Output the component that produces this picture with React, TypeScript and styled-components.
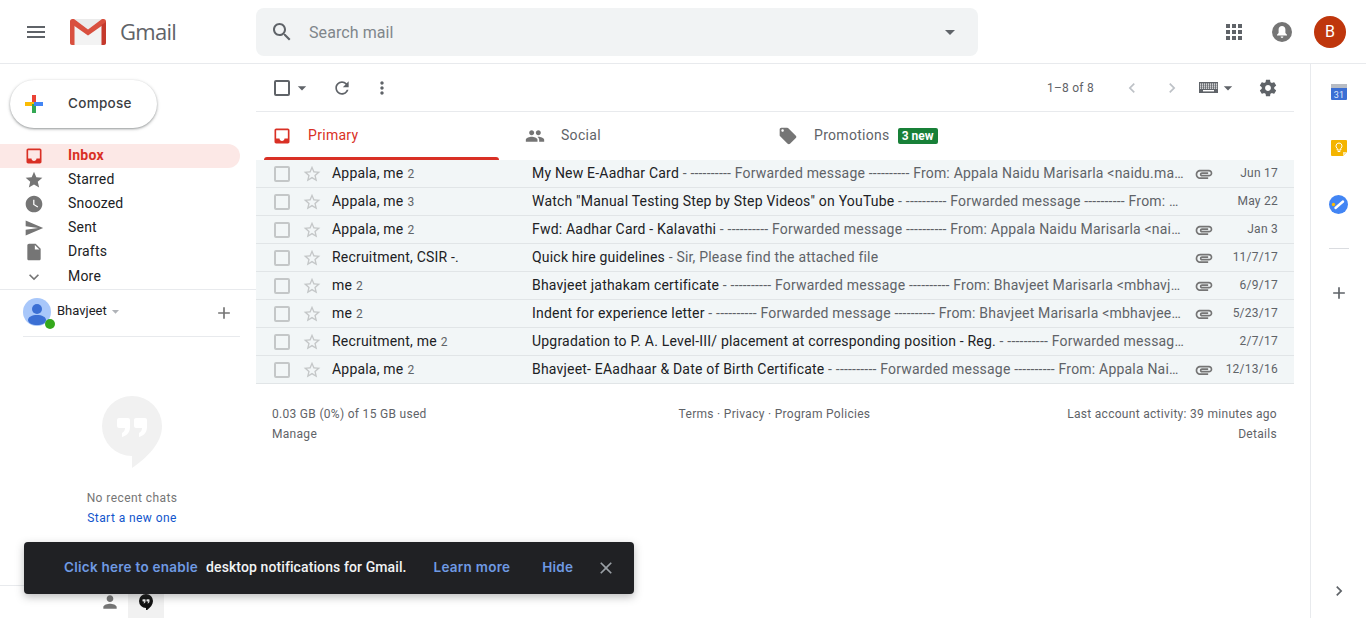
import styled, { createGlobalStyle } from "styled-components";

const PATHS = {
	menu: "M3 18h18v-2H3v2zm0-5h18v-2H3v2zm0-7v2h18V6H3z",
	search: "M15.5 14h-.79l-.28-.27C15.41 12.59 16 11.11 16 9.5 16 5.91 13.09 3 9.5 3S3 5.91 3 9.5 5.91 16 9.5 16c1.61 0 3.09-.59 4.23-1.57l.27.28v.79l5 4.99L20.49 19l-4.99-5zm-6 0C7.01 14 5 11.99 5 9.5S7.01 5 9.5 5 14 7.01 14 9.5 11.99 14 9.5 14z",
	caret: "M7 10l5 5 5-5z",
	apps: "M4 8h4V4H4v4zm6 12h4v-4h-4v4zm-6 0h4v-4H4v4zm0-6h4v-4H4v4zm6 0h4v-4h-4v4zm6-10v4h4V4h-4zm-6 4h4V4h-4v4zm6 6h4v-4h-4v4zm0 6h4v-4h-4v4z",
	refresh: "M17.65 6.35C16.2 4.9 14.21 4 12 4c-4.42 0-7.99 3.58-7.99 8s3.57 8 7.99 8c3.73 0 6.84-2.55 7.73-6h-2.08c-.82 2.33-3.04 4-5.65 4-3.31 0-6-2.69-6-6s2.69-6 6-6c1.66 0 3.14.69 4.22 1.78L13 11h7V4l-2.35 2.35z",
	dots: "M12 8c1.1 0 2-.9 2-2s-.9-2-2-2-2 .9-2 2 .9 2 2 2zm0 2c-1.1 0-2 .9-2 2s.9 2 2 2 2-.9 2-2-.9-2-2-2zm0 6c-1.1 0-2 .9-2 2s.9 2 2 2 2-.9 2-2-.9-2-2-2z",
	inbox: "M19 3H5c-1.1 0-2 .9-2 2v14c0 1.1.9 2 2 2h14c1.1 0 2-.9 2-2V5c0-1.1-.9-2-2-2zm0 12h-4c0 1.66-1.34 3-3 3s-3-1.34-3-3H5V5h14v10z",
	star: "M12 17.27L18.18 21l-1.64-7.03L22 9.24l-7.19-.61L12 2 9.19 8.63 2 9.24l5.46 4.73L5.82 21z",
	starOutline: "M22 9.24l-7.19-.62L12 2 9.19 8.63 2 9.24l5.46 4.73L5.82 21 12 17.27 18.18 21l-1.63-7.03L22 9.24zM12 15.4l-3.76 2.27 1-4.28-3.32-2.88 4.38-.38L12 6.1l1.71 4.04 4.38.38-3.32 2.88 1 4.28L12 15.4z",
	clock: "M12 2C6.47 2 2 6.48 2 12s4.47 10 10 10 10-4.48 10-10S17.52 2 12 2zm4.25 14.15L11 13V7h1.5v5.25l4.5 2.67-.75 1.23z",
	send: "M2.01 21L23 12 2.01 3 2 10l15 2-15 2z",
	draft: "M6 2c-1.1 0-1.99.9-1.99 2L4 20c0 1.1.89 2 1.99 2H18c1.1 0 2-.9 2-2V8l-6-6H6zm7 7V3.5L18.5 9H13z",
	expand: "M16.59 8.59L12 13.17 7.41 8.59 6 10l6 6 6-6z",
	plus: "M19 13h-6v6h-2v-6H5v-2h6V5h2v6h6v2z",
	people: "M16 11c1.66 0 2.99-1.34 2.99-3S17.66 5 16 5c-1.66 0-3 1.34-3 3s1.34 3 3 3zm-8 0c1.66 0 2.99-1.34 2.99-3S9.66 5 8 5C6.34 5 5 6.34 5 8s1.34 3 3 3zm0 2c-2.33 0-7 1.17-7 3.5V19h14v-2.5c0-2.33-4.67-3.5-7-3.5zm8 0c-.29 0-.62.02-.97.05 1.16.84 1.97 1.97 1.97 3.45V19h6v-2.5c0-2.33-4.67-3.5-7-3.5z",
	tag: "M21.41 11.58l-9-9C12.05 2.22 11.55 2 11 2H4c-1.1 0-2 .9-2 2v7c0 .55.22 1.05.59 1.42l9 9c.36.36.86.58 1.41.58.55 0 1.05-.22 1.41-.59l7-7c.37-.36.59-.86.59-1.41 0-.55-.23-1.06-.59-1.42zM5.5 7C4.67 7 4 6.33 4 5.5S4.67 4 5.5 4 7 4.67 7 5.5 6.33 7 5.5 7z",
	gear: "M19.43 12.98c.04-.32.07-.64.07-.98s-.03-.66-.07-.98l2.11-1.65c.19-.15.24-.42.12-.64l-2-3.46c-.12-.22-.39-.3-.61-.22l-2.49 1c-.52-.4-1.08-.73-1.69-.98l-.38-2.65C14.46 2.18 14.25 2 14 2h-4c-.25 0-.46.18-.49.42l-.38 2.65c-.61.25-1.17.59-1.69.98l-2.49-1c-.23-.09-.49 0-.61.22l-2 3.46c-.13.22-.07.49.12.64l2.11 1.65c-.04.32-.07.65-.07.98s.03.66.07.98l-2.11 1.65c-.19.15-.24.42-.12.64l2 3.46c.12.22.39.3.61.22l2.49-1c.52.4 1.08.73 1.69.98l.38 2.65c.03.24.24.42.49.42h4c.25 0 .46-.18.49-.42l.38-2.65c.61-.25 1.17-.59 1.69-.98l2.49 1c.23.09.49 0 .61-.22l2-3.46c.12-.22.07-.49-.12-.64l-2.11-1.65zM12 15.5c-1.93 0-3.5-1.57-3.5-3.5s1.57-3.5 3.5-3.5 3.5 1.57 3.5 3.5-1.57 3.5-3.5 3.5z",
	attach: "M2 12.5C2 9.46 4.46 7 7.5 7H18c2.21 0 4 1.79 4 4s-1.79 4-4 4H9.5C8.12 15 7 13.88 7 12.5S8.12 10 9.5 10H17v2H9.41c-.55 0-.55 1 0 1H18c1.1 0 2-.9 2-2s-.9-2-2-2H7.5C5.57 9 4 10.57 4 12.5S5.57 16 7.5 16H17v2H7.5C4.46 18 2 15.54 2 12.5z",
	person: "M12 12c2.21 0 4-1.79 4-4s-1.79-4-4-4-4 1.79-4 4 1.79 4 4 4zm0 2c-2.67 0-8 1.34-8 4v2h16v-2c0-2.66-5.33-4-8-4z",
	close: "M19 6.41L17.59 5 12 10.59 6.41 5 5 6.41 10.59 12 5 17.59 6.41 19 12 13.41 17.59 19 19 17.59 13.41 12z",
	left: "M15.41 7.41L14 6l-6 6 6 6 1.41-1.41L10.83 12z",
	right: "M10 6L8.59 7.41 13.17 12l-4.58 4.59L10 18l6-6z",
};

const Glyph = styled.svg<{ $size: number; $color: string }>`
	display: block;
	flex: none;
	width: ${({ $size }) => $size}px;
	height: ${({ $size }) => $size}px;
	fill: ${({ $color }) => $color};
`;

const Icon = ({ name, size = 24, color = "#5f6368" }: { name: keyof typeof PATHS; size?: number; color?: string }) => (
	<Glyph $size={size} $color={color} viewBox="0 0 24 24">
		<path d={PATHS[name]} />
	</Glyph>
);

const Global = createGlobalStyle`
	html, body {
		margin: 0;
		height: 100%;
		overflow: hidden;
		background: #fff;
		font-family: Roboto, "Liberation Sans", sans-serif;
		font-size: 14px;
		letter-spacing: 0.2px;
		color: #202124;
	}
`;

const Page = styled.div`
	position: relative;
	height: 618px;
	display: flex;
	flex-direction: column;
	overflow: hidden;
`;

const Header = styled.header`
	display: flex;
	align-items: center;
	height: 63px;
	flex: none;
	border-bottom: 1px solid #e8eaed;
`;

const Brand = styled.div`
	display: flex;
	align-items: center;
	width: 256px;
	flex: none;
	padding-left: 24px;
	box-sizing: border-box;
`;

const BrandName = styled.span`
	margin-left: 14px;
	margin-bottom: 2px;
	font-family: "Open Sans", Roboto, sans-serif;
	font-size: 22px;
	letter-spacing: -0.7px;
	color: #5f6368;
`;

const SearchBox = styled.div`
	display: flex;
	align-items: center;
	width: 722px;
	height: 48px;
	padding: 0 16px 0 14px;
	box-sizing: border-box;
	background: #f1f3f4;
	border-radius: 8px;
`;

const SearchText = styled.span`
	flex: 1;
	margin-left: 15px;
	margin-top: 1px;
	font-size: 16px;
	letter-spacing: 0.08px;
	color: #80868b;
`;

const HeaderActions = styled.div`
	display: flex;
	align-items: center;
	margin-left: auto;
	padding-right: 20px;
`;

const BellSlot = styled.div`
	display: flex;
	margin-left: 26px;
`;

const Avatar = styled.div`
	display: flex;
	align-items: center;
	justify-content: center;
	width: 32px;
	height: 32px;
	margin-left: 22px;
	border-radius: 50%;
	background: #bf360c;
	color: #fff;
	font-size: 16px;
`;

const Body = styled.div`
	flex: 1;
	min-height: 0;
	display: grid;
	grid-template-columns: 256px 1038px 1fr 56px;
`;

const Sidebar = styled.aside`
	display: flex;
	flex-direction: column;
	min-height: 0;
`;

const ComposeArea = styled.div`
	padding: 16px 0 16px 10px;
`;

const ComposeButton = styled.div`
	display: flex;
	align-items: center;
	width: 147px;
	height: 48px;
	box-sizing: border-box;
	padding-left: 15px;
	border-radius: 24px;
	background: #fff;
	box-shadow: 0 1px 2px rgba(60, 64, 67, 0.4), 0 1px 3px 1px rgba(60, 64, 67, 0.15);
	font-family: Inter, Roboto, sans-serif;
	font-weight: 500;
	font-size: 13.5px;
	letter-spacing: 0.3px;
	color: #3c4043;
`;

const ComposeLabel = styled.span`
	margin-left: 25px;
	margin-bottom: 2px;
`;

const NavList = styled.nav`
	display: flex;
	flex-direction: column;
	padding-bottom: 1px;
	border-bottom: 1px solid #e8eaed;
`;

const NavRow = styled.div<{ $active?: boolean; $nudge?: boolean }>`
	display: flex;
	align-items: center;
	width: 240px;
	height: 24px;
	padding-left: 24px;
	box-sizing: border-box;
	border-radius: 0 12px 12px 0;
	background: ${({ $active }) => ($active ? "#fce8e6" : "transparent")};
	color: ${({ $active }) => ($active ? "#d93025" : "#202124")};
	font-weight: ${({ $active }) => ($active ? 700 : 400)};
	padding-top: ${({ $nudge }) => ($nudge ? "2px" : "0")};
`;

const NavLabel = styled.span`
	margin-left: 24px;
	margin-bottom: 2px;
`;

const AccountRow = styled.div`
	display: flex;
	align-items: center;
	height: 46px;
	margin-left: 23px;
	width: 217px;
	border-bottom: 1px solid #e8eaed;
`;

const AccountPhoto = styled.div`
	position: relative;
	width: 28px;
	height: 28px;
	margin-top: -2px;
`;

const OnlineDot = styled.span`
	position: absolute;
	right: -4px;
	bottom: -3px;
	width: 10px;
	height: 10px;
	border-radius: 50%;
	background: #34a81c;
`;

const AccountName = styled.span`
	margin-left: 6px;
	margin-top: -6px;
	font-size: 13px;
	letter-spacing: 0;
`;

const AccountCaret = styled.div`
	margin-top: -4px;
`;

const AccountPlus = styled.div`
	margin-left: auto;
	margin-right: 6px;
`;

const ChatEmpty = styled.div`
	display: flex;
	flex-direction: column;
	align-items: center;
	padding-top: 59px;
	padding-left: 8px;
	font-size: 12px;
	line-height: 20px;
	letter-spacing: 0.42px;
	color: #757575;
`;

const ChatLink = styled.span`
	color: #1155cc;
`;

const ChatBubbleSpace = styled.div`
	margin-bottom: 14px;
`;

const ChatTabs = styled.div`
	display: flex;
	margin-top: auto;
	height: 32px;
	flex: none;
	padding-left: 92px;
	border-top: 1px solid #e8eaed;
`;

const ChatTab = styled.div<{ $active?: boolean }>`
	display: flex;
	align-items: center;
	justify-content: center;
	width: 36px;
	background: ${({ $active }) => ($active ? "#f1f1f1" : "transparent")};
`;

const Main = styled.main`
	display: flex;
	flex-direction: column;
	min-width: 0;
`;

const Toolbar = styled.div`
	display: flex;
	align-items: center;
	height: 47px;
	flex: none;
	padding: 0 16px 0 18px;
	border-bottom: 1px solid #e8eaed;
`;

const ToolCheck = styled.span`
	width: 12px;
	height: 12px;
	border: 2px solid #5f6368;
	border-radius: 2px;
`;

const ToolSlot = styled.div<{ $width: number }>`
	display: flex;
	align-items: center;
	justify-content: center;
	width: ${({ $width }) => $width}px;
	flex: none;
`;

const PageCount = styled.span`
	margin-left: auto;
	margin-right: 18px;
	font-size: 12px;
	letter-spacing: 0.25px;
	color: #5f6368;
`;

const KeyboardSlot = styled.div`
	display: flex;
	align-items: center;
	margin-left: 7px;
	margin-right: 20px;
`;

const Tabs = styled.div`
	display: flex;
	height: 48px;
	flex: none;
	padding-left: 8px;
`;

const Tab = styled.div<{ $active?: boolean }>`
	position: relative;
	display: flex;
	align-items: center;
	width: 253px;
	padding-left: 8px;
	box-sizing: border-box;
	color: ${({ $active }) => ($active ? "#d93025" : "#5f6368")};
	letter-spacing: 0.3px;
	&::after {
		content: "";
		display: ${({ $active }) => ($active ? "block" : "none")};
		position: absolute;
		left: 0;
		right: 18px;
		bottom: 0;
		height: 3px;
		border-radius: 3px 3px 0 0;
		background: #d93025;
	}
`;

const TabLabel = styled.span`
	margin-left: 16px;
	margin-bottom: 2px;
`;

const NewBadge = styled.span`
	margin-left: 8px;
	padding: 0 4px;
	height: 16px;
	line-height: 16px;
	border-radius: 2px;
	background: #188038;
	color: #fff;
	font-size: 12px;
	font-weight: 700;
	letter-spacing: 0;
`;

const MailRow = styled.div`
	display: flex;
	align-items: center;
	height: 27px;
	padding-left: 18px;
	background: #f2f6f7;
	border-bottom: 1px solid #e1e5e7;
`;

const RowCheck = styled.span`
	width: 12px;
	height: 12px;
	flex: none;
	border: 2px solid #c4c7c8;
	border-radius: 2px;
`;

const RowStar = styled.div`
	margin-left: 12px;
	margin-right: 10px;
`;

const Sender = styled.div`
	width: 200px;
	flex: none;
	margin-bottom: 2px;
	white-space: nowrap;
`;

const SenderCount = styled.span`
	margin-left: 4px;
	font-size: 12px;
	color: #5f6368;
`;

const Message = styled.div`
	width: 652px;
	flex: none;
	margin-bottom: 2px;
	overflow: hidden;
	white-space: nowrap;
	text-overflow: ellipsis;
	color: #5f6368;
`;

const Subject = styled.span`
	color: #202124;
`;

const AttachSlot = styled.div`
	width: 20px;
	margin-left: 10px;
	flex: none;
`;

const MailDate = styled.div`
	margin-left: auto;
	margin-bottom: 2px;
	padding-right: 16px;
	font-size: 12px;
	letter-spacing: 0.25px;
	color: #5f6368;
`;

const Footer = styled.footer`
	display: grid;
	grid-template-columns: 1fr 1fr 1fr;
	padding: 20px 17px 0 16px;
	font-size: 12px;
	line-height: 20px;
	letter-spacing: 0.3px;
	color: #5f6368;
`;

const FooterCell = styled.div<{ $align: string }>`
	text-align: ${({ $align }) => $align};
`;

const RightRail = styled.aside`
	display: flex;
	flex-direction: column;
	align-items: center;
	grid-column: 4;
	border-left: 1px solid #e8eaed;
	padding: 0 0 17px;
`;

const RailItem = styled.div`
	display: flex;
	align-items: center;
	justify-content: center;
	height: 56px;
	width: 100%;
	&:nth-child(3) {
		margin-bottom: 16px;
	}
`;

const RailRule = styled.div`
	width: 20px;
	height: 1px;
	background: #dadce0;
	margin-bottom: 16px;
`;

const RailBottom = styled.div`
	margin-top: auto;
`;

const Toast = styled.div`
	position: absolute;
	left: 24px;
	bottom: 24px;
	display: flex;
	align-items: center;
	width: 610px;
	height: 52px;
	box-sizing: border-box;
	padding-left: 40px;
	border-radius: 4px;
	background: #202124;
	box-shadow: 0 3px 8px rgba(60, 64, 67, 0.35);
	color: #e8eaed;
	white-space: nowrap;
`;

const ToastLink = styled.span<{ $gap: number }>`
	margin-left: ${({ $gap }) => $gap}px;
	margin-bottom: 2px;
	font-family: Inter, Roboto, sans-serif;
	font-weight: 600;
	font-size: 13.5px;
	letter-spacing: 0.26px;
	color: #6f9ae3;
`;

const ToastText = styled.span`
	margin-left: 8px;
	margin-bottom: 2px;
	font-weight: 500;
	letter-spacing: 0.1px;
	color: #f1f3f4;
`;

const ToastClose = styled.div`
	margin-left: 23px;
`;

const GmailLogo = () => (
	<svg width="36" height="26" viewBox="0 0 36 26">
		<rect width="36" height="26" rx="2" fill="#ebebeb" />
		<path d="M4.500 26V7l13.500 9.500L31.500 7v19z" fill="#f3f3f3" />
		<path d="M0 2.500C0 1 1 0 2.500 0H4l14 10.500L32 0h1.500C35 0 36 1 36 2.500V4L31.500 7 18 16.500 4.500 7 0 4z" fill="#d9503f" />
		<path d="M0 3l4.500 3v20H2c-1 0-2-1-2-2z" fill="#d9503f" />
		<path d="M36 3l-4.500 3v20H34c1 0 2-1 2-2z" fill="#c5392c" />
	</svg>
);

const ColorPlus = () => (
	<svg width="18" height="18" viewBox="0 0 18 18">
		<rect x="7" y="0" width="4" height="9" fill="#ea4335" />
		<rect x="0" y="7" width="9" height="4" fill="#fbbc04" />
		<rect x="7" y="9" width="4" height="9" fill="#34a853" />
		<rect x="9" y="7" width="9" height="4" fill="#4285f4" />
	</svg>
);

const AccountPicture = () => (
	<svg width="28" height="28" viewBox="0 0 28 28">
		<circle cx="14" cy="14" r="14" fill="#a8c7fa" />
		<circle cx="14" cy="11" r="5" fill="#3b6fd4" />
		<path d="M5 22c0-3 4-5 9-5s9 2 9 5-4 5-9 5-9-2-9-5z" fill="#3b6fd4" />
	</svg>
);

const BellIcon = () => (
	<svg width="20" height="20" viewBox="0 0 20 20">
		<circle cx="10" cy="10" r="10" fill="#757575" />
		<path d="M10 4c-2 0-3.400 1.500-3.400 3.500V11L5 12.800v.7h10v-.7L13.400 11V7.500C13.400 5.500 12 4 10 4z" fill="#fff" />
		<path d="M8.600 14.500h2.800a1.400 1.400 0 0 1-2.800 0z" fill="#fff" />
	</svg>
);

const KeyboardIcon = () => (
	<svg width="19" height="11" viewBox="0 0 19 11">
		<rect width="19" height="11" fill="#5f6368" />
		{[1.5, 3.5, 5.5].map((y) =>
			[1, 3, 5, 7, 9, 11, 13, 15, 17].map((x) => (
				<rect key={`${x}-${y}`} x={x} y={y} width="1.2" height="1.2" fill="#fff" />
			)),
		)}
		<rect x="4" y="8" width="11" height="1.4" fill="#fff" />
	</svg>
);

const HangoutsBubble = ({ size, fill, mark }: { size: number; fill: string; mark: string }) => (
	<svg width={size} height={(size * 72) / 60} viewBox="0 0 60 72">
		<path d="M30 0a30 30 0 0 1 30 30c0 17-14 31-30 42V60A30 30 0 0 1 30 0z" fill={fill} />
		<path d="M15 24q0-2 2-2h9q2 0 2 2v7c0 6-4 9-8 10v-4c2-1 3-3 3-5h-6q-2 0-2-2z" fill={mark} />
		<path d="M32 24q0-2 2-2h9q2 0 2 2v7c0 6-4 9-8 10v-4c2-1 3-3 3-5h-6q-2 0-2-2z" fill={mark} />
	</svg>
);

const CalendarIcon = () => (
	<svg width="16" height="16" viewBox="0 0 16 16">
		<rect width="16" height="16" rx="1" fill="#3b6fd4" />
		<rect width="16" height="4" fill="#b7bcc4" />
		<text x="8" y="13.500" textAnchor="middle" fontFamily="Roboto, sans-serif" fontSize="9" fill="#dfe8fb">
			31
		</text>
	</svg>
);

const KeepIcon = () => (
	<svg width="16" height="16" viewBox="0 0 16 16">
		<path d="M1 0h14a1 1 0 0 1 1 1v11l-4 4H1a1 1 0 0 1-1-1V1a1 1 0 0 1 1-1z" fill="#f4b400" />
		<path d="M16 12h-4v4z" fill="#fbe7a9" />
		<path d="M8 3a3 3 0 0 0-1.800 5.400V10h3.600V8.400A3 3 0 0 0 8 3z" fill="none" stroke="#fff" strokeWidth="1" />
		<rect x="6.700" y="11" width="2.600" height="1" fill="#fff" />
	</svg>
);

const TasksIcon = () => (
	<svg width="19" height="19" viewBox="0 0 19 19">
		<circle cx="9.500" cy="9.500" r="9.500" fill="#4285f4" />
		<path d="M6.500 13l7.500-6.500" stroke="#fff" strokeWidth="2.400" strokeLinecap="round" />
		<circle cx="4.500" cy="9.500" r="1.700" fill="#fbbc04" />
	</svg>
);

const NAV = [
	{ label: "Inbox", icon: "inbox", active: true },
	{ label: "Starred", icon: "star" },
	{ label: "Snoozed", icon: "clock" },
	{ label: "Sent", icon: "send" },
	{ label: "Drafts", icon: "draft" },
	{ label: "More", icon: "expand", nudge: true },
] as const;

const DASH = "----------";

const MAILS = [
	{ sender: "Appala, me", count: 2, subject: "My New E-Aadhar Card", snippet: `${DASH} Forwarded message ${DASH} From: Appala Naidu Marisarla <naidu.marisarla@gmail.com> Date: Sun, Jun 17`, attach: true, date: "Jun 17" },
	{ sender: "Appala, me", count: 3, subject: 'Watch "Manual Testing Step by Step Videos" on YouTube', snippet: `${DASH} Forwarded message ${DASH} From: Appala Naidu Marisarla`, attach: false, date: "May 22" },
	{ sender: "Appala, me", count: 2, subject: "Fwd: Aadhar Card - Kalavathi", snippet: `${DASH} Forwarded message ${DASH} From: Appala Naidu Marisarla <naidu.marisarla@gmail.com> Date: Wed`, attach: true, date: "Jan 3" },
	{ sender: "Recruitment, CSIR -.", subject: "Quick hire guidelines", snippet: "Sir, Please find the attached file", attach: true, date: "11/7/17" },
	{ sender: "me", count: 2, subject: "Bhavjeet jathakam certificate", snippet: `${DASH} Forwarded message ${DASH} From: Bhavjeet Marisarla <mbhavjeet@gmail.com> Date: Fri, Jun 9`, attach: true, date: "6/9/17" },
	{ sender: "me", count: 2, subject: "Indent for experience letter", snippet: `${DASH} Forwarded message ${DASH} From: Bhavjeet Marisarla <mbhavjeet@gmail.com> Date: Tue, May 23`, attach: true, date: "5/23/17" },
	{ sender: "Recruitment, me", count: 2, subject: "Upgradation to P. A. Level-III/ placement at corresponding position - Reg.", snippet: `${DASH} Forwarded message ${DASH} From: Recruitment`, attach: false, date: "2/7/17" },
	{ sender: "Appala, me", count: 2, subject: "Bhavjeet- EAadhaar & Date of Birth Certificate", snippet: `${DASH} Forwarded message ${DASH} From: Appala Naidu Marisarla <naidu.marisarla@gmail.com>`, attach: true, date: "12/13/16" },
];

const App = () => {
	return (
		<Page>
			<Global />
			<Header>
				<Brand>
					<Icon name="menu" />
					<ToolSlot $width={22} />
					<GmailLogo />
					<BrandName>Gmail</BrandName>
				</Brand>
				<SearchBox>
					<Icon name="search" />
					<SearchText>Search mail</SearchText>
					<Icon name="caret" />
				</SearchBox>
				<HeaderActions>
					<Icon name="apps" color="#5f6368" />
					<BellSlot>
						<BellIcon />
					</BellSlot>
					<Avatar>B</Avatar>
				</HeaderActions>
			</Header>
			<Body>
				<Sidebar>
					<ComposeArea>
						<ComposeButton>
							<ColorPlus />
							<ComposeLabel>Compose</ComposeLabel>
						</ComposeButton>
					</ComposeArea>
					<NavList>
						{NAV.map((item) => (
							<NavRow key={item.label} $active={"active" in item} $nudge={"nudge" in item}>
								<Icon name={item.icon} size={20} color={"active" in item ? "#d93025" : "#757575"} />
								<NavLabel>{item.label}</NavLabel>
							</NavRow>
						))}
					</NavList>
					<AccountRow>
						<AccountPhoto>
							<AccountPicture />
							<OnlineDot />
						</AccountPhoto>
						<AccountName>Bhavjeet</AccountName>
						<AccountCaret>
							<Icon name="caret" size={17} color="#b0b3b8" />
						</AccountCaret>
						<AccountPlus>
							<Icon name="plus" size={20} color="#757575" />
						</AccountPlus>
					</AccountRow>
					<ChatEmpty>
						<ChatBubbleSpace>
							<HangoutsBubble size={60} fill="#f1f1f1" mark="#fff" />
						</ChatBubbleSpace>
						<span>No recent chats</span>
						<ChatLink>Start a new one</ChatLink>
					</ChatEmpty>
					<ChatTabs>
						<ToolSlot $width={36}>
							<Icon name="person" size={20} color="#757575" />
						</ToolSlot>
						<ChatTab $active>
							<HangoutsBubble size={14} fill="#111" mark="#f1f1f1" />
						</ChatTab>
					</ChatTabs>
				</Sidebar>
				<Main>
					<Toolbar>
						<ToolCheck />
						<ToolSlot $width={24}>
							<Icon name="caret" size={20} />
						</ToolSlot>
						<ToolSlot $width={56}>
							<Icon name="refresh" size={20} />
						</ToolSlot>
						<ToolSlot $width={24}>
							<Icon name="dots" size={20} />
						</ToolSlot>
						<PageCount>1–8 of 8</PageCount>
						<ToolSlot $width={40}>
							<Icon name="left" size={20} color="#bdc1c6" />
						</ToolSlot>
						<ToolSlot $width={40}>
							<Icon name="right" size={20} color="#bdc1c6" />
						</ToolSlot>
						<KeyboardSlot>
							<KeyboardIcon />
							<Icon name="caret" size={20} />
						</KeyboardSlot>
						<Icon name="gear" size={20} />
					</Toolbar>
					<Tabs>
						<Tab $active>
							<Icon name="inbox" size={20} color="#d93025" />
							<TabLabel>Primary</TabLabel>
						</Tab>
						<Tab>
							<Icon name="people" size={20} color="#757575" />
							<TabLabel>Social</TabLabel>
						</Tab>
						<Tab>
							<Icon name="tag" size={20} color="#757575" />
							<TabLabel>Promotions</TabLabel>
							<NewBadge>3 new</NewBadge>
						</Tab>
					</Tabs>
					<div>
						{MAILS.map((mail) => (
							<MailRow key={mail.subject}>
								<RowCheck />
								<RowStar>
									<Icon name="starOutline" size={20} color="#c4c7c8" />
								</RowStar>
								<Sender>
									{mail.sender}
									{mail.count && <SenderCount>{mail.count}</SenderCount>}
								</Sender>
								<Message>
									<Subject>{mail.subject}</Subject> - {mail.snippet}
								</Message>
								<AttachSlot>{mail.attach && <Icon name="attach" size={20} color="#757575" />}</AttachSlot>
								<MailDate>{mail.date}</MailDate>
							</MailRow>
						))}
					</div>
					<Footer>
						<FooterCell $align="left">
							0.03 GB (0%) of 15 GB used
							<br />
							Manage
						</FooterCell>
						<FooterCell $align="center">Terms · Privacy · Program Policies</FooterCell>
						<FooterCell $align="right">
							Last account activity: 39 minutes ago
							<br />
							Details
						</FooterCell>
					</Footer>
				</Main>
				<RightRail>
					<RailItem>
						<CalendarIcon />
					</RailItem>
					<RailItem>
						<KeepIcon />
					</RailItem>
					<RailItem>
						<TasksIcon />
					</RailItem>
					<RailRule />
					<RailItem>
						<Icon name="plus" size={20} color="#5f6368" />
					</RailItem>
					<RailBottom>
						<Icon name="right" size={20} color="#5f6368" />
					</RailBottom>
				</RightRail>
			</Body>
			<Toast>
				<ToastLink $gap={0}>Click here to enable</ToastLink>
				<ToastText>desktop notifications for Gmail.</ToastText>
				<ToastLink $gap={27}>Learn more</ToastLink>
				<ToastLink $gap={32}>Hide</ToastLink>
				<ToastClose>
					<Icon name="close" size={20} color="#9aa0a6" />
				</ToastClose>
			</Toast>
		</Page>
	);
};

export default App;
